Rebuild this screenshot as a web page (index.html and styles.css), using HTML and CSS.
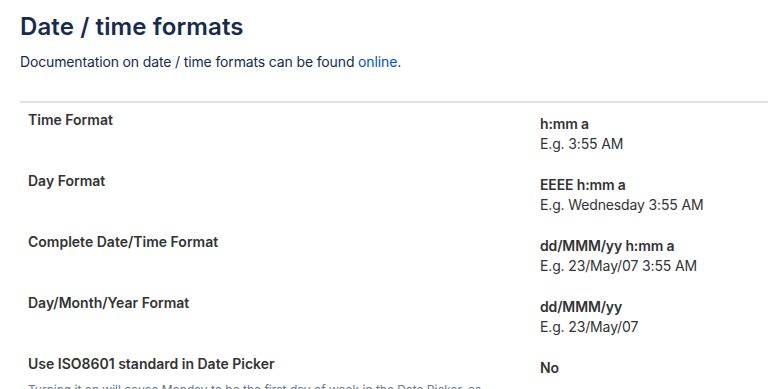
FILE: index.html
```html
<!DOCTYPE html>
<html lang="en">
<head>
    <meta charset="UTF-8">
    <meta name="viewport" content="width=device-width, initial-scale=1.0">
    <title>Date / time formats</title>
    <link rel="stylesheet" href="styles.css">
</head>
<body>
    <!-- Page header -->
    <h1 class="page-title">Date / time formats</h1>
    <p class="page-intro">Documentation on date / time formats can be found <a href="#">online</a>.</p>

    <!-- Settings table -->
    <div class="settings">
        <div class="setting-row">
            <div class="setting-label">Time Format</div>
            <div class="setting-value">
                <div class="value-main">h:mm a</div>
                <div class="value-example">E.g. 3:55 AM</div>
            </div>
        </div>
        <div class="setting-row">
            <div class="setting-label">Day Format</div>
            <div class="setting-value">
                <div class="value-main">EEEE h:mm a</div>
                <div class="value-example">E.g. Wednesday 3:55 AM</div>
            </div>
        </div>
        <div class="setting-row">
            <div class="setting-label">Complete Date/Time Format</div>
            <div class="setting-value">
                <div class="value-main">dd/MMM/yy h:mm a</div>
                <div class="value-example">E.g. 23/May/07 3:55 AM</div>
            </div>
        </div>
        <div class="setting-row">
            <div class="setting-label">Day/Month/Year Format</div>
            <div class="setting-value">
                <div class="value-main">dd/MMM/yy</div>
                <div class="value-example">E.g. 23/May/07</div>
            </div>
        </div>
        <div class="setting-row">
            <div class="setting-label">
                Use ISO8601 standard in Date Picker
                <div class="setting-desc">Turning it on will cause Monday to be the first day of week in the Date Picker, as well as week numbers to be displayed according to ISO8601.</div>
            </div>
            <div class="setting-value">
                <div class="value-main">No</div>
            </div>
        </div>
    </div>
</body>
</html>
```

FILE: styles.css
```css
body {
    font-family: Inter, "Noto Sans", sans-serif;
    margin: 0;
    padding: 0 0 0 20px;
    background-color: #fff;
    color: #172B4D;
    font-size: 14px;
    line-height: 20px;
}

.page-title {
    font-size: 24px;
    line-height: 28px;
    font-weight: 600;
    letter-spacing: 0.005em;
    color: #172B4D;
    margin: 13px 0 0;
}

.page-intro {
    margin: 11px 0 0;
    letter-spacing: -0.01em;
}

.page-intro a {
    color: #0052CC;
    text-decoration: none;
}

.settings {
    margin-top: 29px;
    border-top: 2px solid #DFE1E6;
}

.setting-row {
    display: grid;
    grid-template-columns: 512px 1fr;
    height: 61px;
}

.setting-label {
    padding: 7px 8px 0;
    font-weight: 600;
    color: #333;
}

.setting-value {
    padding: 11px 8px 0;
    color: #333;
    letter-spacing: -0.01em;
}

.value-main {
    font-weight: 600;
}

.setting-desc {
    max-width: 470px;
    margin-top: 8px;
    font-size: 12px;
    line-height: 16px;
    font-weight: 400;
    color: #6B778C;
}
```
